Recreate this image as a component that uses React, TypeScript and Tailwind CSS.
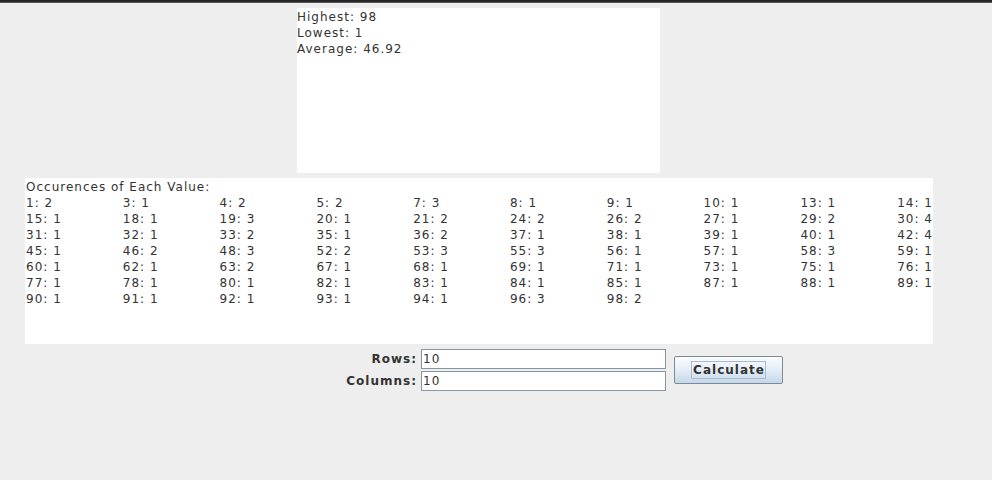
const ROWS = [
  ['1: 2', '3: 1', '4: 2', '5: 2', '7: 3', '8: 1', '9: 1', '10: 1', '13: 1', '14: 1'],
  ['15: 1', '18: 1', '19: 3', '20: 1', '21: 2', '24: 2', '26: 2', '27: 1', '29: 2', '30: 4'],
  ['31: 1', '32: 1', '33: 2', '35: 1', '36: 2', '37: 1', '38: 1', '39: 1', '40: 1', '42: 4'],
  ['45: 1', '46: 2', '48: 3', '52: 2', '53: 3', '55: 3', '56: 1', '57: 1', '58: 3', '59: 1'],
  ['60: 1', '62: 1', '63: 2', '67: 1', '68: 1', '69: 1', '71: 1', '73: 1', '75: 1', '76: 1'],
  ['77: 1', '78: 1', '80: 1', '82: 1', '83: 1', '84: 1', '85: 1', '87: 1', '88: 1', '89: 1'],
  ['90: 1', '91: 1', '92: 1', '93: 1', '94: 1', '96: 3', '98: 2'],
];

export default function App() {
  return (
    <div className="w-[992px] h-[480px] bg-[#eeeeee] flex flex-col font-['DejaVu_Sans',sans-serif] text-[12px] leading-[16px] tracking-[1px] text-[#333333] overflow-hidden">
      <div className="h-[2px] bg-[#262626]" />
      <div className="h-[1px] bg-[#5a5a5a]" />

      {/* stats */}
      <div className="ml-[297px] mt-[5px] w-[363px] h-[165px] bg-white pt-[1px]">
        <div>Highest: 98</div>
        <div>Lowest: 1</div>
        <div>Average: 46.92</div>
      </div>

      {/* occurrences */}
      <div className="ml-[25px] mt-[5px] w-[908px] h-[166px] bg-white pl-[1px] pt-[1px]">
        <div>Occurences of Each Value:</div>
        {ROWS.map((row, i) => (
          <div key={i} className="grid grid-cols-[repeat(10,96.8px)]">
            {row.map((cell) => (
              <span key={cell} className="whitespace-nowrap">{cell}</span>
            ))}
          </div>
        ))}
      </div>

      {/* inputs */}
      <div className="ml-[330px] mt-[5px] flex items-center">
        <div className="grid grid-cols-[87px_245px] gap-x-[4px] gap-y-[2px] items-center">
          <label className="text-right font-bold">Rows:</label>
          <input
            defaultValue="10"
            className="h-[20px] bg-white border border-[#8595a5] px-[1px] text-[12px] text-[#333333] outline-none"
          />
          <label className="text-right font-bold">Columns:</label>
          <input
            defaultValue="10"
            className="h-[20px] bg-white border border-[#8595a5] px-[1px] text-[12px] text-[#333333] outline-none"
          />
        </div>
        <button className="ml-[8px] w-[109px] h-[28px] rounded-[2px] border border-[#7a8a99] bg-gradient-to-b from-[#fbfdff] via-[#e4edf6] to-[#c5d7e9] flex items-center justify-center">
          <span className="border border-[#a8bccf] pl-[1px] font-bold text-[#333333] leading-[16px]">Calculate</span>
        </button>
      </div>
    </div>
  );
}
